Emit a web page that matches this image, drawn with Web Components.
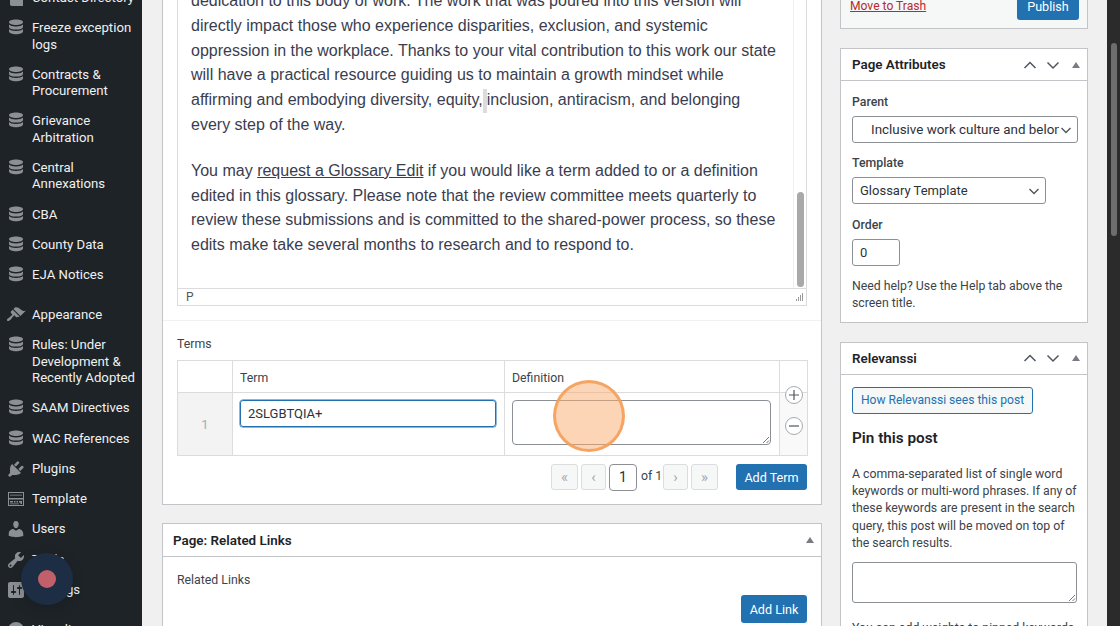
<!DOCTYPE html>
<html lang="en">
<head>
<meta charset="utf-8">
<title>Edit Page</title>
<style>
  html, body { margin: 0; padding: 0; height: 626px; overflow: hidden; background: #f0f0f1; }
  body { font-family: Roboto, "Liberation Sans", sans-serif; }
  tiny-editor a { text-decoration: underline; }
  tiny-editor p { margin: 0 0 21px; }
  tiny-editor .sel { display: inline-block; white-space: pre; background: #dcdcdc; width: 4px; height: 24px; vertical-align: middle; }
</style>
</head>
<body>

<wp-app>
  <admin-menu slot="menu">
    <menu-item icon="book">Contact Directory</menu-item>
    <menu-item icon="db">Freeze exception logs</menu-item>
    <menu-item icon="db">Contracts &amp; Procurement</menu-item>
    <menu-item icon="db">Grievance Arbitration</menu-item>
    <menu-item icon="db">Central Annexations</menu-item>
    <menu-item icon="db">CBA</menu-item>
    <menu-item icon="db">County Data</menu-item>
    <menu-item icon="db" class="last">EJA Notices</menu-item>
    <menu-item icon="brush">Appearance</menu-item>
    <menu-item icon="db">Rules: Under Development &amp; Recently Adopted</menu-item>
    <menu-item icon="db">SAAM Directives</menu-item>
    <menu-item icon="db">WAC References</menu-item>
    <menu-item icon="plugin">Plugins</menu-item>
    <menu-item icon="template">Template</menu-item>
    <menu-item icon="user">Users</menu-item>
    <menu-item icon="tools">Tools</menu-item>
    <menu-item icon="settings" class="last">Settings</menu-item>
    <menu-item icon="pie">Visualizer</menu-item>
  </admin-menu>

  <main-column slot="main">
    <edit-panel>
      <tiny-editor>
        <p>dedication to this body of work. The work that was poured into this version will<br>
        directly impact those who experience disparities, exclusion, and systemic<br>
        oppression in the workplace. Thanks to your vital contribution to this work our state<br>
        will have a practical resource guiding us to maintain a growth mindset while<br>
        affirming and embodying diversity, equity,<span class="sel"> </span>inclusion, antiracism, and belonging<br>
        every step of the way.</p>
        <p>You may <a>request a Glossary Edit</a> if you would like a term added to or a definition<br>
        edited in this glossary. Please note that the review committee meets quarterly to<br>
        review these submissions and is committed to the shared-power process, so these<br>
        edits make take several months to research and to respond to.</p>
      </tiny-editor>
      <terms-table></terms-table>
    </edit-panel>
    <wp-box title="Page: Related Links" only-toggle>
      <related-links></related-links>
    </wp-box>
  </main-column>

  <side-column slot="side">
    <publish-box></publish-box>
    <wp-box title="Page Attributes">
      <page-attributes></page-attributes>
    </wp-box>
    <wp-box title="Relevanssi">
      <relevanssi-panel></relevanssi-panel>
    </wp-box>
  </side-column>

  <page-scrollbar slot="scroll"></page-scrollbar>
  <click-marker slot="overlay"></click-marker>
  <record-dot slot="overlay"></record-dot>
</wp-app>

<script>
const ICONS = {
  db: '<path d="M3 4.200C3 2.600 6.100 1.600 10 1.600s7 1 7 2.600-3.100 2.700-7 2.700-7-1.100-7-2.700z"/><path d="M3 6.400v2.500c0 1.600 3.100 2.700 7 2.700s7-1.100 7-2.700V6.400c-.9 1.300-3.700 2-7 2s-6.100-.7-7-2z"/><path d="M3 11v2.600c0 1.600 3.100 2.700 7 2.700s7-1.100 7-2.700V11c-.9 1.300-3.700 2-7 2s-6.100-.7-7-2z"/>',
  book: '<path d="M4 2h11l2 2v14H6c-1.500 0-2-1-2-2z"/>',
  brush: '<path d="M14.480 11.060L7.410 3.990l1.500-1.500c.5-.56 2.300-.47 3.510.32 1.210.8 1.430 1.280 2.910 2.100 1.180.64 2.450 1.260 4.450.85zm-.71.71L6.700 4.700 4.930 6.470c-.39.39-.39 1.020 0 1.410l1.060 1.060c.39.39.39 1.030 0 1.420-.6.6-1.430 1.110-2.210 1.690-.35.26-.7.53-1.010.84C1.430 13.230.4 14.910 1.200 15.700c.79.8 2.470-.23 3.830-1.570.31-.31.58-.66.84-1.010.58-.78 1.090-1.610 1.690-2.210.39-.39 1.020-.39 1.410 0l1.060 1.060c.39.39 1.020.39 1.410 0z"/>',
  plugin: '<path d="M13.110 4.360L9.870 7.600 8 5.730l3.240-3.240c.35-.34 1.050-.2 1.560.32.52.51.66 1.210.31 1.550zm-8 1.770l.91-1.120 9.010 9.010-1.190.84c-.71.71-2.630 1.160-3.820 1.160H6.140L4.900 17.260c-.59.59-1.540.59-2.120 0-.59-.58-.59-1.530 0-2.120l1.240-1.240v-3.880c0-1.130.4-3.190 1.090-3.890zm7.260 3.970l3.240-3.240c.34-.35 1.040-.21 1.550.31.52.51.66 1.210.31 1.550l-3.240 3.250z"/>',
  template: '<path fill-rule="evenodd" d="M2 3h16v14H2zM3 4v5h14V4zM3 10.500V16h14v-5.500z"/><path d="M4.500 5.500h1V7h-1zM6.500 5.500h1V7h-1zM8.500 5.500h1V7h-1zM10.500 5.500h1V7h-1zM12.500 5.500h1V7h-1zM14.500 5.500h1V7h-1zM4 12h3v1.500H4zM8 12h1.500v1.500H8zM10.500 12H12v1.500h-1.500zM13 12h3v3h-1.500v-1.500H13zM4 14.500h9v.8H4z"/>',
  user: '<path d="M10 9.250c-2.270 0-2.730-3.440-2.730-3.440C7 4.020 7.820 2 9.970 2c2.160 0 2.980 2.020 2.710 3.810 0 0-.41 3.440-2.680 3.440zm0 2.570L12.720 10c2.390 0 4.520 2.330 4.520 4.530v2.490s-3.650 1.130-7.240 1.130c-3.650 0-7.240-1.130-7.240-1.130v-2.490c0-2.250 1.940-4.480 4.470-4.480z"/>',
  tools: '<path d="M16.680 9.770c-1.340 1.340-3.300 1.670-4.950.99l-5.410 6.520c-.99.99-2.590.99-3.580 0s-.99-2.590 0-3.570l6.520-5.420c-.68-1.650-.35-3.610.99-4.950 1.280-1.280 3.120-1.620 4.720-1.060l-2.890 2.890 2.820 2.820 2.860-2.870c.53 1.580.18 3.390-1.080 4.650zM3.810 16.210c.4.39 1.040.39 1.430 0 .4-.4.4-1.040 0-1.430-.39-.4-1.030-.4-1.430 0-.39.39-.39 1.030 0 1.430z"/>',
  settings: '<path d="M18 16V4c0-1.100-.9-2-2-2H4c-1.100 0-2 .9-2 2v12c0 1.100.9 2 2 2h12c1.100 0 2-.9 2-2zM8 11h1c.55 0 1 .45 1 1s-.45 1-1 1H8v1.500c0 .28-.22.5-.5.5s-.5-.22-.5-.5V13H6c-.55 0-1-.45-1-1s.45-1 1-1h1V5.500c0-.28.22-.5.5-.5s.5.22.5.5V11zm5-2h-1c-.55 0-1-.45-1-1s.45-1 1-1h1V5.500c0-.28.22-.5.5-.5s.5.22.5.5V7h1c.55 0 1 .45 1 1s-.45 1-1 1h-1v5.500c0 .28-.22.5-.5.5s-.5-.22-.5-.5V9z"/>',
  pie: '<circle cx="10" cy="10" r="8"/>'
};

const CHEVRON = '<svg width="14" height="14" viewBox="0 0 14 14" fill="none" stroke="#50575e" stroke-width="1.400"><path d="M2.500 5l4.500 4.500L11.500 5"/></svg>';
const GRIP = '<svg class="grip" width="8" height="8" viewBox="0 0 8 8" stroke="#50575e" stroke-width=".8"><path d="M1 7l6-6M4.500 7L7 4.500"/></svg>';

class WpApp extends HTMLElement {
  constructor() {
    super();
    this.attachShadow({ mode: 'open' }).innerHTML = `<style>
      :host { display: flex; position: relative; width: 1120px; height: 626px; overflow: hidden; background: #f0f0f1; color: #3c434a; }
      .content { flex: 1; display: flex; gap: 18px; padding-left: 20px; min-width: 0; }
    </style>
    <slot name="menu"></slot>
    <div class="content"><slot name="main"></slot><slot name="side"></slot></div>
    <slot name="scroll"></slot>
    <slot name="overlay"></slot>`;
  }
}

class AdminMenu extends HTMLElement {
  constructor() {
    super();
    this.attachShadow({ mode: 'open' }).innerHTML = `<style>
      :host { display: block; flex: none; width: 142px; height: 626px; background: #1d2327; overflow: hidden; }
      .list { display: flex; flex-direction: column; margin-top: -17px; }
      ::slotted(*) { flex: none; }
    </style><div class="list"><slot></slot></div>`;
  }
}

class MenuItem extends HTMLElement {
  constructor() {
    super();
    const icon = ICONS[this.getAttribute('icon')] || '';
    this.attachShadow({ mode: 'open' }).innerHTML = `<style>
      :host { display: flex; gap: 6px; padding: 7px 4px 7px 6px; color: #f0f0f1; font-size: 13.200px; line-height: 16.300px; }
      :host(.last) { margin-bottom: 9.500px; }
      svg { flex: none; width: 20px; height: 20px; fill: #8c8f94; margin: -2px 0 -2px; }
      .label { flex: 1; }
    </style><svg viewBox="0 0 20 20">${icon}</svg><div class="label"><slot></slot></div>`;
  }
}

class MainColumn extends HTMLElement {
  constructor() {
    super();
    this.attachShadow({ mode: 'open' }).innerHTML = `<style>
      :host { display: flex; flex-direction: column; gap: 18px; flex: none; width: 660px; margin-top: -30px; }
      ::slotted(*) { flex: none; }
    </style><slot></slot>`;
  }
}

class SideColumn extends HTMLElement {
  constructor() {
    super();
    this.attachShadow({ mode: 'open' }).innerHTML = `<style>
      :host { display: flex; flex-direction: column; gap: 19px; flex: none; width: 248px; margin-top: -30px; }
      ::slotted(*) { flex: none; }
    </style><slot></slot>`;
  }
}

class EditPanel extends HTMLElement {
  constructor() {
    super();
    this.attachShadow({ mode: 'open' }).innerHTML = `<style>
      :host { display: block; background: #fff; border: 1px solid #c3c4c7; border-top: 0; box-sizing: border-box; }
    </style><slot></slot>`;
  }
}

class TinyEditor extends HTMLElement {
  constructor() {
    super();
    this.attachShadow({ mode: 'open' }).innerHTML = `<style>
      :host { display: block; padding: 0 14px 14px; border-bottom: 1px solid #f0f0f1; }
      .frame { border: 1px solid #dcdcde; border-top: 0; }
      .body { display: flex; height: 318px; border-bottom: 1px solid #dcdcde; }
      .text { flex: 1; padding: 19px 13px 0; font-family: "Liberation Sans", Arial, sans-serif; font-size: 16px; line-height: 24.800px; color: #3a3d4e; white-space: nowrap; overflow: hidden; }
      .track { flex: none; width: 13px; background: #fff; border-left: 1px solid #efefef; padding: 0 0 1px 3px; box-sizing: border-box; display: flex; flex-direction: column; justify-content: flex-end; }
      .thumb { height: 95px; width: 7px; border-radius: 4px; background: #a9a9a9; }
      .status { display: flex; align-items: center; justify-content: space-between; height: 16px; padding: 0 2px 0 8px; font-size: 12px; color: #50575e; }
      svg { display: block; }
    </style>
    <div class="frame">
      <div class="body"><div class="text"><slot></slot></div><div class="track"><div class="thumb"></div></div></div>
      <div class="status"><span>P</span><svg width="10" height="10" viewBox="0 0 10 10" fill="#9a9a9a"><path d="M8 1h1v8H8zM6 3h1v6H6zM4 5h1v4H4zM2 7h1v2H2z"/></svg></div>
    </div>`;
  }
}

class TermsTable extends HTMLElement {
  constructor() {
    super();
    this.attachShadow({ mode: 'open' }).innerHTML = `<style>
      :host { display: block; padding: 14px 14px 14px; font-size: 12.300px; color: #3c434a; }
      .label { line-height: 17px; margin-bottom: 7px; padding-top: 1px; }
      .grid { display: grid; grid-template-columns: 55px 272px 275px 1fr; grid-template-rows: 32px 62px; width: 631px; box-sizing: border-box; border: 1px solid #dcdcde; }
      .grid > div { box-sizing: border-box; border-right: 1px solid #dcdcde; }
      .head { border-bottom: 1px solid #dcdcde; display: flex; align-items: center; padding-left: 7px; padding-top: 2px; }
      .num { background: #f3f3f3; color: #a7aaad; display: flex; align-items: center; justify-content: center; font-size: 13px; }
      .term, .def { padding: 7px 7px 0; }
      .actions { grid-column: 4; grid-row: 1 / 3; border-right: 0 !important; display: flex; flex-direction: column; align-items: center; gap: 13px; padding-top: 25px; background: linear-gradient(#fff 31px, #dcdcde 31px, #dcdcde 32px, #f9f9f9 32px); }
      .input { box-sizing: border-box; height: 27px; width: 256px; border: 1px solid #2271b1; border-radius: 3px; box-shadow: 0 0 0 .5px #2271b1; padding: 0 7px; line-height: 25px; font-size: 13px; color: #2c3338; }
      .area { box-sizing: border-box; position: relative; height: 45px; width: 259px; border: 1px solid #8c8f94; border-radius: 4px; background: #fff; }
      .grip { position: absolute; right: 0; bottom: 0; }
      .round { box-sizing: border-box; width: 18px; height: 18px; border: 1px solid #a7aaad; border-radius: 50%; background: #fff; display: flex; align-items: center; justify-content: center; }
      .pager { display: flex; justify-content: flex-end; align-items: center; margin-top: 8px; height: 26px; gap: 3px; }
      .pg { box-sizing: border-box; height: 26px; width: 25px; border: 1px solid #dcdcde; border-radius: 3px; background: #f6f7f7; color: #a7aaad; display: flex; align-items: center; justify-content: center; font-size: 15px; }
      .pg.first { width: 27px; }
      .cur { box-sizing: border-box; height: 27px; width: 28px; border: 1px solid #8c8f94; border-radius: 4px; display: flex; align-items: center; justify-content: center; color: #2c3338; font-size: 14px; background: #fff; }
      .of { margin: -3px 0 0 1px; width: 19px; white-space: nowrap; color: #3c434a; }
      .add { box-sizing: border-box; margin-left: 15px; width: 71px; height: 26px; border-radius: 3px; background: #2271b1; color: #fff; font-size: 12.600px; display: flex; align-items: center; justify-content: center; }
    </style>
    <div class="label">Terms</div>
    <div class="grid">
      <div class="head"></div><div class="head">Term</div><div class="head">Definition</div>
      <div class="actions">
        <div class="round"><svg width="10" height="10" viewBox="0 0 10 10" stroke="#50575e" stroke-width="1.200"><path d="M5 0v10M0 5h10"/></svg></div>
        <div class="round"><svg width="10" height="10" viewBox="0 0 10 10" stroke="#50575e" stroke-width="1.200"><path d="M0 5h10"/></svg></div>
      </div>
      <div class="num">1</div>
      <div class="term"><div class="input">2SLGBTQIA+</div></div>
      <div class="def"><div class="area">${GRIP}</div></div>
    </div>
    <div class="pager">
      <div class="pg first">«</div><div class="pg">‹</div><div class="cur">1</div><div class="of">of 1</div><div class="pg">›</div><div class="pg first">»</div>
      <div class="add">Add Term</div>
    </div>`;
  }
}

class WpBox extends HTMLElement {
  constructor() {
    super();
    const title = this.getAttribute('title');
    const onlyToggle = this.hasAttribute('only-toggle');
    const moves = onlyToggle ? '' : `
      <svg width="16" height="16" viewBox="0 0 16 16" fill="none" stroke="#50575e" stroke-width="1.500"><path d="M2.500 11L8 5.500 13.500 11"/></svg>
      <svg width="16" height="16" viewBox="0 0 16 16" fill="none" stroke="#50575e" stroke-width="1.500"><path d="M2.500 5.500L8 11l5.500-5.500"/></svg>`;
    this.removeAttribute('title');
    this.attachShadow({ mode: 'open' }).innerHTML = `<style>
      :host { display: block; box-sizing: border-box; background: #fff; border: 1px solid #c3c4c7; }
      :host([only-toggle]) header { height: 33px; padding-left: 10px; }
      header { display: flex; align-items: center; box-sizing: border-box; height: 32px; padding: 0 7px 0 11px; border-bottom: 1px solid #c3c4c7; }
      h2 { flex: 1; margin: 0; font-size: 13.400px; font-weight: 600; color: #1d2327; }
      .ctl { display: flex; align-items: center; gap: 7px; }
      .tri { width: 0; height: 0; border: 4px solid transparent; border-top: 0; border-bottom: 6px solid #787c82; margin-left: 4px; }
    </style>
    <header><h2>${title}</h2><div class="ctl">${moves}<div class="tri"></div></div></header>
    <slot></slot>`;
  }
}

class RelatedLinks extends HTMLElement {
  constructor() {
    super();
    this.attachShadow({ mode: 'open' }).innerHTML = `<style>
      :host { display: block; padding: 15px 14px 0; height: 110px; box-sizing: border-box; font-size: 12.300px; color: #3c434a; }
      .label { line-height: 17px; }
      .row { display: flex; justify-content: flex-end; margin-top: 6px; }
      .add { width: 66px; height: 28px; border-radius: 3px; background: #2271b1; color: #fff; font-size: 12.600px; display: flex; align-items: center; justify-content: center; }
    </style><div class="label">Related Links</div><div class="row"><div class="add">Add Link</div></div>`;
  }
}

class PublishBox extends HTMLElement {
  constructor() {
    super();
    this.attachShadow({ mode: 'open' }).innerHTML = `<style>
      :host { display: flex; align-items: flex-end; justify-content: space-between; box-sizing: border-box; height: 59px; background: #f6f7f7; border: 1px solid #c3c4c7; padding: 0 8px 8px 9px; font-size: 12.600px; }
      a { color: #b32d2e; text-decoration: underline; font-size: 12.100px; line-height: 17px; margin-bottom: 5px; }
      .pub { width: 62px; height: 40px; border-radius: 3px; background: #2271b1; color: #fff; display: flex; align-items: flex-end; justify-content: center; padding-bottom: 5px; box-sizing: border-box; line-height: 17px; }
    </style><a>Move to Trash</a><div class="pub">Publish</div>`;
  }
}

class PageAttributes extends HTMLElement {
  constructor() {
    super();
    this.attachShadow({ mode: 'open' }).innerHTML = `<style>
      :host { display: block; padding: 12.500px 10px 10px 11px; font-size: 12.300px; color: #3c434a; }
      label { display: block; font-weight: 500; line-height: 17px; margin-bottom: 5.500px; color: #3c434a; }
      .sel { box-sizing: border-box; display: flex; align-items: center; height: 27px; border: 1px solid #8c8f94; border-radius: 3px; padding: 0 4px 0 7px; margin-bottom: 11.500px; color: #2c3338; font-size: 13px; background: #fff; }
      .sel span { flex: 1; overflow: hidden; white-space: nowrap; }
      .parent { padding-left: 18px; width: 226px; font-size: 13.400px; }
      .tpl { width: 194px; margin-bottom: 12.500px; }
      .num { box-sizing: border-box; display: flex; align-items: center; width: 48px; height: 27px; border: 1px solid #8c8f94; border-radius: 3px; padding-left: 7px; margin-bottom: 11.500px; color: #2c3338; font-size: 13px; }
      p { margin: 0; line-height: 17px; }
    </style>
    <label>Parent</label>
    <div class="sel parent"><span>Inclusive work culture and belonging</span>${CHEVRON}</div>
    <label>Template</label>
    <div class="sel tpl"><span>Glossary Template</span>${CHEVRON}</div>
    <label>Order</label>
    <div class="num">0</div>
    <p>Need help? Use the Help tab above the screen title.</p>`;
  }
}

class RelevanssiPanel extends HTMLElement {
  constructor() {
    super();
    this.attachShadow({ mode: 'open' }).innerHTML = `<style>
      :host { display: block; padding: 12px 10px 0 11px; font-size: 12.300px; color: #3c434a; height: 300px; box-sizing: border-box; overflow: hidden; }
      .btn { box-sizing: border-box; display: flex; align-items: center; justify-content: center; width: 181px; height: 27px; border: 1px solid #2271b1; border-radius: 3px; background: #f6f7f7; color: #2271b1; font-size: 12.100px; }
      h3 { margin: 14px 0 0; font-size: 15.300px; line-height: 20px; font-weight: 600; color: #1d2327; }
      p { margin: 18.400px 0 0; line-height: 17.300px; }
      .area { box-sizing: border-box; position: relative; width: 225px; height: 41px; margin-top: 10px; border: 1px solid #8c8f94; border-radius: 3px; }
      .area + p { margin-top: 16.500px; white-space: nowrap; }
      .grip { position: absolute; right: 0; bottom: 0; }
    </style>
    <div class="btn">How Relevanssi sees this post</div>
    <h3>Pin this post</h3>
    <p>A comma-separated list of single word keywords or multi-word phrases. If any of these keywords are present in the search query, this post will be moved on top of the search results.</p>
    <div class="area">${GRIP}</div>
    <p>You can add weights to pinned keywords</p>`;
  }
}

class PageScrollbar extends HTMLElement {
  constructor() {
    super();
    this.attachShadow({ mode: 'open' }).innerHTML = `<style>
      :host { display: block; flex: none; box-sizing: border-box; width: 13px; height: 626px; background: #2b2b2b; padding: 43px 3px 0 4px; }
      div { height: 193px; border-radius: 4px; background: #6d6d6d; }
    </style><div></div>`;
  }
}

class ClickMarker extends HTMLElement {
  constructor() {
    super();
    this.attachShadow({ mode: 'open' }).innerHTML = `<style>
      :host { position: absolute; left: 553px; top: 380px; box-sizing: border-box; width: 72px; height: 72px; border-radius: 50%; background: rgba(250, 170, 110, .5); border: 3px solid rgba(245, 160, 90, .9); }
    </style>`;
  }
}

class RecordDot extends HTMLElement {
  constructor() {
    super();
    this.attachShadow({ mode: 'open' }).innerHTML = `<style>
      :host { position: absolute; left: 21px; top: 553px; width: 52px; height: 52px; border-radius: 50%; background: #1c2d44; box-shadow: 0 4px 14px rgba(0, 0, 0, .15); display: flex; align-items: center; justify-content: center; }
      div { width: 18px; height: 18px; border-radius: 50%; background: #c1606a; }
    </style><div></div>`;
  }
}

customElements.define('wp-app', WpApp);
customElements.define('admin-menu', AdminMenu);
customElements.define('menu-item', MenuItem);
customElements.define('main-column', MainColumn);
customElements.define('side-column', SideColumn);
customElements.define('edit-panel', EditPanel);
customElements.define('tiny-editor', TinyEditor);
customElements.define('terms-table', TermsTable);
customElements.define('wp-box', WpBox);
customElements.define('related-links', RelatedLinks);
customElements.define('publish-box', PublishBox);
customElements.define('page-attributes', PageAttributes);
customElements.define('relevanssi-panel', RelevanssiPanel);
customElements.define('page-scrollbar', PageScrollbar);
customElements.define('click-marker', ClickMarker);
customElements.define('record-dot', RecordDot);
</script>
</body>
</html>
